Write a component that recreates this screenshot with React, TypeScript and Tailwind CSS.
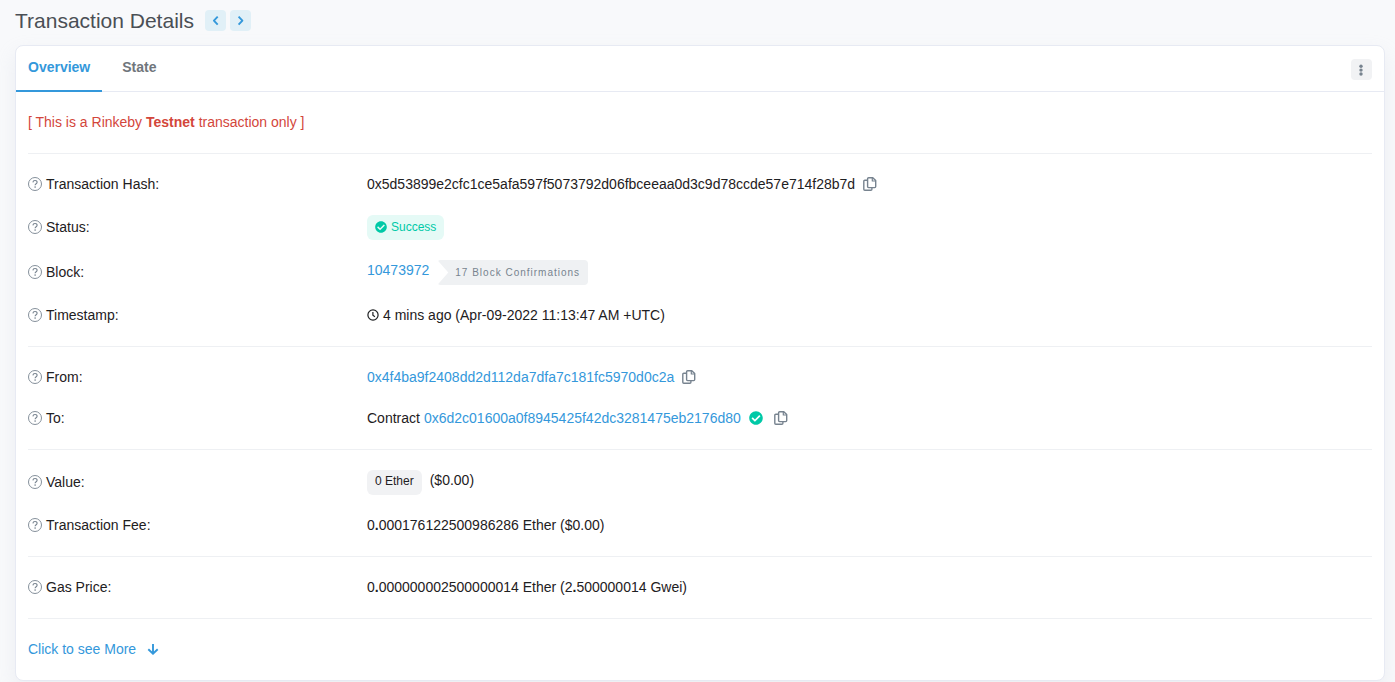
import type { ReactNode } from "react";

import { FaCheckCircle } from "react-icons/fa";

function HelpIcon() {
  return (
    <svg
      viewBox="0 0 14 14"
      className="mb-px h-[14px] w-[14px] shrink-0 text-[#77838f]"
      fill="none"
      stroke="currentColor"
      aria-hidden="true"
    >
      <circle cx="7" cy="7" r="6.5" strokeWidth="0.9" />
      <path
        d="M4.9 5.400C5 4.200 5.900 3.500 7 3.500c1.200 0 2.100.8 2.100 1.800C9.100 6.700 7.100 6.700 7.100 8.300"
        strokeWidth="1.100"
      />
      <circle cx="7.100" cy="10.100" r=".8" fill="currentColor" stroke="none" />
    </svg>
  );
}

function ClockIcon() {
  return (
    <svg
      viewBox="0 0 12 12"
      className="mb-px h-3 w-3 shrink-0"
      fill="none"
      stroke="currentColor"
      aria-hidden="true"
    >
      <circle cx="6" cy="6" r="5.100" strokeWidth="1.200" />
      <path d="M5.900 3v3.200l2 1.500" strokeWidth="1.200" />
    </svg>
  );
}

function CopyButton({ label }: { label: string }) {
  return (
    <button type="button" aria-label={label} className="mb-px text-[#77838f]">
      <svg
        viewBox="0 0 14 14"
        className="block h-[14px] w-[14px]"
        fill="none"
        stroke="currentColor"
        strokeWidth="1.400"
        strokeLinejoin="round"
        aria-hidden="true"
      >
        <path d="M5.600.7h4.200l2.900 2.900v6a1 1 0 0 1-1 1H5.600a1 1 0 0 1-1-1V1.700a1 1 0 0 1 1-1z" />
        <path d="M9.300.8v3.200h3.300" strokeWidth="1.200" />
        <path d="M4.500 3.200H1.800a1 1 0 0 0-1 1v8.100a1 1 0 0 0 1 1h6.100a1 1 0 0 0 1-1v-1.500" />
      </svg>
    </button>
  );
}

function Row({ label, children }: { label: string; children: ReactNode }) {
  return (
    <div className="flex items-center gap-[3px]">
      <dt className="flex w-1/4 items-center gap-1">
        <HelpIcon />
        {label}
      </dt>
      <dd className="flex min-w-0 flex-1 items-center">{children}</dd>
    </div>
  );
}

function Group({ children }: { children: ReactNode }) {
  return (
    <dl className="flex flex-col gap-5 border-t border-[#eef0f3] py-5">
      {children}
    </dl>
  );
}

function NavButton({ label, points }: { label: string; points: string }) {
  return (
    <button
      type="button"
      aria-label={label}
      className="flex h-[21px] w-[21px] items-center justify-center rounded bg-[#e1f0f7] text-[#3498db]"
    >
      <svg
        viewBox="0 0 13 13"
        className="h-[13px] w-[13px]"
        fill="none"
        stroke="currentColor"
        strokeWidth="1.900"
        strokeLinejoin="round"
        aria-hidden="true"
      >
        <polyline points={points} />
      </svg>
    </button>
  );
}

export default function App() {
  return (
    <div className="min-h-screen bg-[#f8f9fb] font-['Liberation_Sans',Arial,sans-serif] text-[14px] leading-[21px] text-[#1e2022]">
      <header className="flex h-[45px] items-center px-[15px] pb-1">
        <h1 className="text-[21px] text-[#4a4f55]">Transaction Details</h1>
        <nav className="ml-[11px] flex gap-1" aria-label="Transactions">
          <NavButton label="Previous transaction" points="8.700,2.700 4.900,6.700 8.700,10.700" />
          <NavButton label="Next transaction" points="4.600,2.700 8.400,6.700 4.600,10.700" />
        </nav>
      </header>

      <main className="mr-[10px] ml-[15px] rounded-lg border border-[#e7eaf3] bg-white shadow-[0_8px_19px_rgba(189,197,209,0.2)]">
        <div className="flex items-end justify-between border-b border-[#e7eaf3] pr-3">
          <div className="-mb-px flex font-bold" role="tablist">
            <button
              type="button"
              role="tab"
              aria-selected="true"
              className="border-b-2 border-[#3498db] px-3 pt-[11px] pb-3 text-[#3498db]"
            >
              Overview
            </button>
            <button
              type="button"
              role="tab"
              aria-selected="false"
              className="border-b-2 border-transparent px-5 pt-[11px] pb-3 text-[#70767c]"
            >
              State
            </button>
          </div>
          <button
            type="button"
            aria-label="More options"
            className="mb-[11px] flex h-[21px] w-[21px] items-center justify-center rounded bg-[#f1f2f4] pr-px text-[#77838f]"
          >
            <svg
              viewBox="0 0 4 12"
              className="h-3 w-1"
              fill="currentColor"
              aria-hidden="true"
            >
              <circle cx="2" cy="2.200" r="1.700" />
              <circle cx="2" cy="6.100" r="1.700" />
              <circle cx="2" cy="10" r="1.700" />
            </svg>
          </button>
        </div>

        <div className="px-3">
          <p className="py-5 text-[#d3463b]">
            [ This is a Rinkeby <b>Testnet</b> transaction only ]
          </p>

          <Group>
            <Row label="Transaction Hash:">
              <span className="mr-2">
                0x5d53899e2cfc1ce5afa597f5073792d06fbceeaa0d3c9d78ccde57e714f28b7d
              </span>
              <CopyButton label="Copy transaction hash" />
            </Row>
            <Row label="Status:">
              <span className="flex h-[25px] items-center gap-1 rounded-md bg-[#e5faf6] px-2 text-[12px] text-[#00c9a7]">
                <FaCheckCircle className="mb-px" />
                Success
              </span>
            </Row>
            <Row label="Block:">
              <a href="#block" className="mr-2 self-start text-[#3498db]">
                10473972
              </a>
              <span className="flex h-[25px] items-center rounded bg-[#eff1f3] pr-2 pl-[18px] text-[10px] tracking-[1px] text-[#77838f] [clip-path:polygon(0_0,100%_0,100%_100%,0_100%,11px_50%)]">
                17 Block Confirmations
              </span>
            </Row>
            <Row label="Timestamp:">
              <span className="flex items-center gap-1">
                <ClockIcon />4 mins ago (Apr-09-2022 11:13:47 AM +UTC)
              </span>
            </Row>
          </Group>

          <Group>
            <Row label="From:">
              <a href="#from" className="mr-2 text-[#3498db]">
                0x4f4ba9f2408dd2d112da7dfa7c181fc5970d0c2a
              </a>
              <CopyButton label="Copy sender address" />
            </Row>
            <Row label="To:">
              <span className="mr-1">Contract</span>
              <a href="#to" className="mr-2 text-[#3498db]">
                0x6d2c01600a0f8945425f42dc3281475eb2176d80
              </a>
              <FaCheckCircle className="mr-[11px] mb-px text-[#00c9a7]" />
              <CopyButton label="Copy contract address" />
            </Row>
          </Group>

          <Group>
            <Row label="Value:">
              <span className="mr-2 flex h-[25px] items-center rounded-md bg-[#f1f2f4] px-2 pb-[2px] text-[12px]">
                0 Ether
              </span>
              <span className="self-start">($0.00)</span>
            </Row>
            <Row label="Transaction Fee:">
              <span>
                0<b>.</b>000176122500986286 Ether ($0.00)
              </span>
            </Row>
          </Group>

          <Group>
            <Row label="Gas Price:">
              <span>
                0<b>.</b>000000002500000014 Ether (2<b>.</b>500000014 Gwei)
              </span>
            </Row>
          </Group>

          <div className="border-t border-[#eef0f3] py-5">
            <a href="#more" className="inline-flex items-center text-[#3498db]">
              Click to see More
              <svg
                viewBox="0 0 12 12"
                className="mb-px ml-[11px] h-3 w-3"
                fill="none"
                stroke="currentColor"
                strokeWidth="1.900"
                aria-hidden="true"
              >
                <path d="M6 1v9.500M1.300 6.200 6 10.700l4.700-4.500" />
              </svg>
            </a>
          </div>
        </div>
      </main>
    </div>
  );
}
